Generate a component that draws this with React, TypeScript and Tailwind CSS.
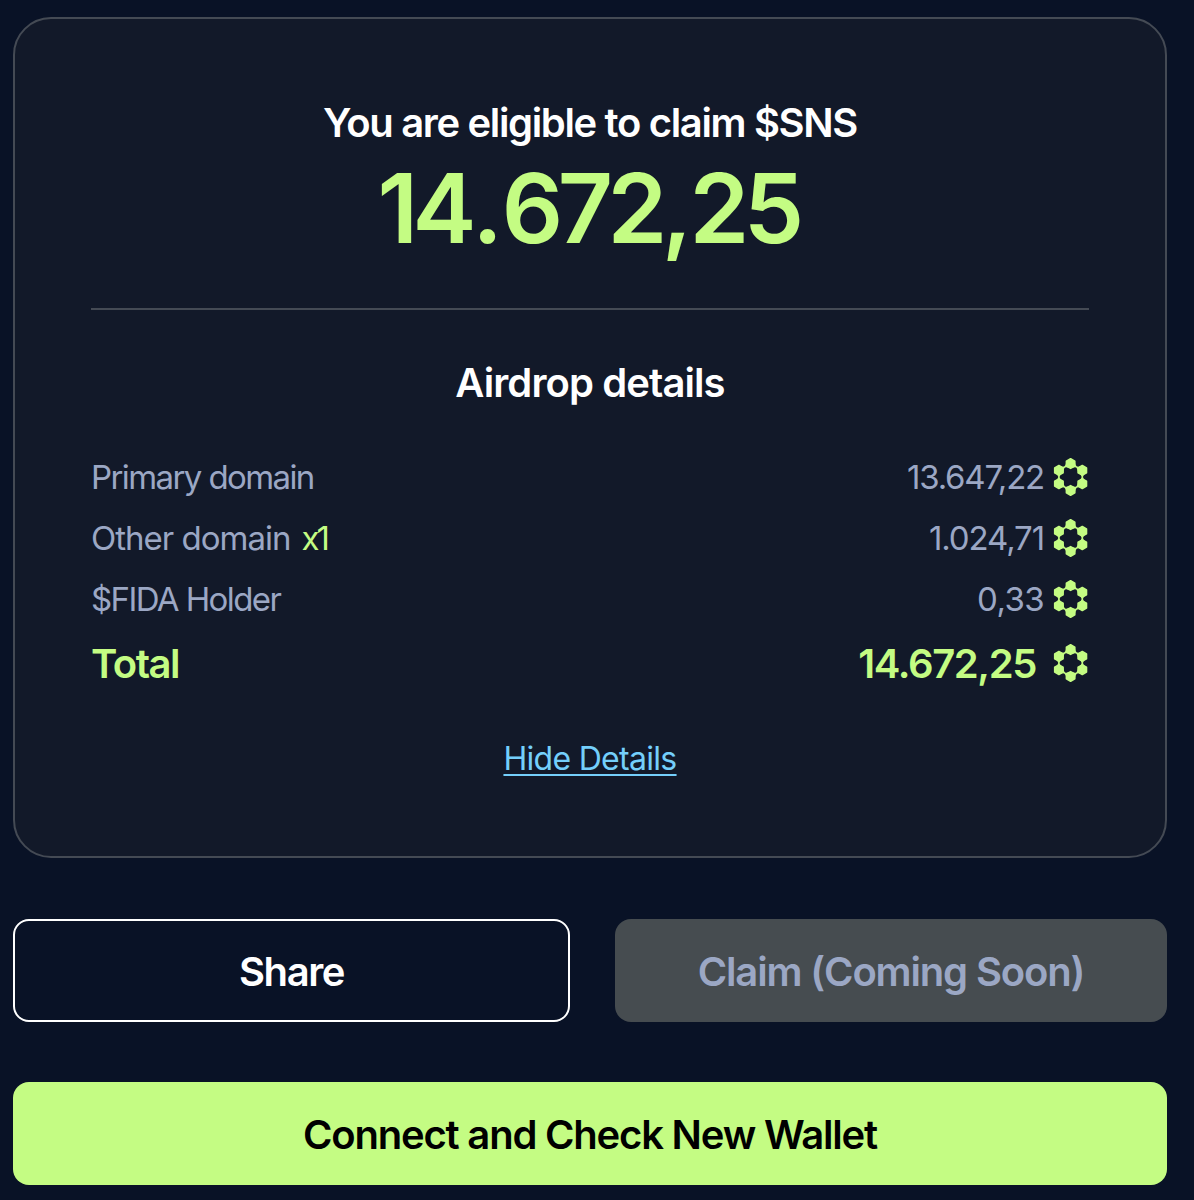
type Row = {
  label: string;
  labelClass: string;
  count?: string;
  value: string;
  valueClass: string;
};

const ROWS: Row[] = [
  { label: "Primary domain", labelClass: "tracking-[-1.6px]", value: "13.647,22", valueClass: "tracking-[-1.2px]" },
  { label: "Other domain", labelClass: "tracking-[-1px]", count: "x1", value: "1.024,71", valueClass: "tracking-[-1.1px]" },
  { label: "$FIDA Holder", labelClass: "tracking-[-1.6px]", value: "0,33", valueClass: "tracking-[-0.6px]" },
];

// centres of the six nodes on the token ring
const NODES = [
  [17.6, 4.6],
  [29.3, 11.3],
  [29.3, 24.7],
  [17.6, 31.4],
  [5.9, 24.7],
  [5.9, 11.3],
];

function TokenIcon() {
  return (
    <svg viewBox="0 0 36 38" className="h-[38px] w-9 shrink-0 overflow-visible text-[#c4fc83]" fill="currentColor" aria-hidden="true">
      {NODES.map(([x, y], i) => (
        <g key={i}>
          <path
            d="M0 -4.8 4.2 -2.4V2.4L0 4.8 -4.2 2.4V-2.4Z"
            stroke="currentColor"
            strokeWidth="1.6"
            strokeLinejoin="round"
            transform={`translate(${x} ${y})`}
          />
          <path
            d="M3 -3.3Q5 -0.7 6.7 -0.7T10.4 -3.3V3.3Q8.4 0.7 6.7 0.7T3 3.3Z"
            transform={`translate(${x} ${y}) rotate(${30 + i * 60})`}
          />
        </g>
      ))}
    </svg>
  );
}

export default function App() {
  return (
    <div className="flex h-[1200px] w-[1194px] flex-col bg-[#091226] pt-[17px] pr-[27px] pl-[13px] font-['Inter',sans-serif] text-white">
      <section className="flex h-[841px] shrink-0 flex-col rounded-[38px] border-2 border-[#444a54] bg-[#121929] px-[76px] pt-[79px]">
        <h1 className="h-[50px] text-center text-[40px] leading-[50px] font-semibold tracking-[-1.35px] whitespace-nowrap">
          You are eligible to claim $SNS
        </h1>
        <p className="h-[120px] pr-1 text-center text-[96px] leading-[120px] font-semibold tracking-[-5.5px] text-[#c4fc83]">
          1<span className="tracking-[-1px]">4.</span>672<span className="tracking-[-3px]">,</span>25
        </p>
        <hr className="mt-[40px] border-t-2 border-[#444a54]" />

        <h2 className="mt-[48px] text-center text-[40px] leading-[50px] font-semibold tracking-[-0.9px]">Airdrop details</h2>
        <div className="mt-[39px] flex flex-col">
          {ROWS.map((row) => (
            <div key={row.label} className="flex h-[61px] items-center justify-between text-[33px] text-[#9ba7c4]">
              <div className="flex items-center gap-[11px] whitespace-nowrap">
                <span className={row.labelClass}>{row.label}</span>
                {row.count && <span className="tracking-[-3px] text-[#c4fc83]">{row.count}</span>}
              </div>
              <div className="flex items-center gap-[9px]">
                <span className={row.valueClass}>{row.value}</span>
                <TokenIcon />
              </div>
            </div>
          ))}
          <div className="flex h-[68px] items-center justify-between text-[40px] font-semibold text-[#c4fc83]">
            <span className="tracking-[-1.5px]">Total</span>
            <div className="flex items-center gap-[17px]">
              <span className="tracking-[-1.4px]">14.672,25</span>
              <TokenIcon />
            </div>
          </div>
        </div>
        <button className="mt-[41px] self-center text-[32px] leading-[40px] tracking-[-0.7px] text-[#74cffb] underline decoration-2 underline-offset-4">
          Hide Details
        </button>
      </section>

      <div className="mt-[61px] flex h-[103px] shrink-0 gap-[45px] text-[40px] font-semibold">
        <button className="w-[557px] rounded-2xl border-2 border-white pt-0.5 tracking-[-1.4px]">Share</button>
        <button disabled className="flex-1 rounded-2xl bg-[#464c50] pt-0.5 tracking-[-1.15px] text-[#9ba7c4]">
          Claim (Coming Soon)
        </button>
      </div>
      <button className="mt-[60px] h-[103px] shrink-0 rounded-2xl bg-[#c4fc83] pt-0.5 text-[40px] font-semibold tracking-[-1.2px] text-black">
        Connect and Check New Wallet
      </button>
    </div>
  );
}
